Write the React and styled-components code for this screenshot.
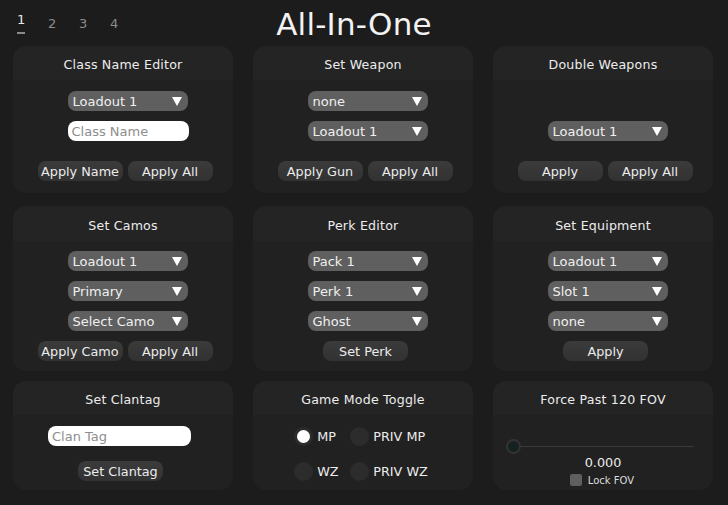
import React, { useState } from 'react';
import styled, { createGlobalStyle } from 'styled-components';

const GlobalStyle = createGlobalStyle`
    html, body {
        margin: 0;
        padding: 0;
        background: #1c1c1c;
    }
    body {
        font-family: "DejaVu Sans", "Open Sans", sans-serif;
        color: #e6e6e6;
        width: 728px;
        height: 505px;
        overflow: hidden;
    }
`;

const Page = styled.div`
    display: flex;
    flex-direction: column;
    padding: 0 15px 0 13px;
`;

const TopBar = styled.header`
    display: grid;
    grid-template-columns: 1fr auto 1fr;
    align-items: start;
    height: 46px;
    padding-right: 18px;
`;

const Tabs = styled.nav`
    display: flex;
    padding: 12px 0 0 2px;
`;

const Tab = styled.button`
    width: 31px;
    background: none;
    border: none;
    padding: 0 0 0 2px;
    text-align: left;
    font-family: inherit;
    font-size: 13px;
    color: ${(p) => (p.$active ? '#e8e8e8' : '#8c8c8c')};
    cursor: pointer;

    &::after {
        content: '';
        display: ${(p) => (p.$active ? 'block' : 'none')};
        width: 8px;
        height: 2px;
        margin-top: 5px;
        background: #8a8a8a;
    }
`;

const Title = styled.h1`
    margin: 6px 0 0;
    font-size: 31px;
    font-weight: normal;
    color: #f2f2f2;
    letter-spacing: 0.2px;
`;

const Row = styled.div`
    display: grid;
    grid-template-columns: repeat(3, 220px);
    column-gap: 20px;
    margin-top: ${(p) => p.$top || 0}px;
    height: ${(p) => p.$height}px;
`;

const Card = styled.section`
    display: flex;
    flex-direction: column;
    background: #212121;
    border-radius: 13px;
    overflow: hidden;
`;

const CardHead = styled.div`
    box-sizing: border-box;
    height: ${(p) => p.$h || 34}px;
    padding-top: 3px;
    flex: none;
    display: flex;
    align-items: center;
    justify-content: center;
    background: #242424;
    font-size: 12.6px;
    color: #ececec;
    letter-spacing: 0.2px;
`;

const CardBody = styled.div`
    display: flex;
    flex-direction: column;
    align-items: center;
    padding-top: ${(p) => p.$pt ?? 10}px;
    gap: 10px;
`;

const SelectBox = styled.div`
    position: relative;
    box-sizing: border-box;
    width: 120px;
    height: 20px;
    border-radius: 8px;
    background: #5f5f5f;
    display: flex;
    align-items: center;
    padding-left: 5px;
    font-size: 13px;
    color: #f0f0f0;
    margin-left: 9px;
`;

const Arrow = styled.svg`
    position: absolute;
    right: 6px;
    top: 6px;
`;

const TextInput = styled.input`
    box-sizing: border-box;
    width: ${(p) => p.$w || 121}px;
    height: 20px;
    border: none;
    border-radius: 8px;
    background: #ffffff;
    padding: 0 0 0 4px;
    font-family: inherit;
    font-size: 13px;
    color: #222;
    outline: none;
    margin-left: ${(p) => p.$ml || 0}px;

    &::placeholder {
        color: #8d8d8d;
    }
`;

const Buttons = styled.div`
    display: flex;
    gap: 5px;
    margin-top: ${(p) => p.$mt || 0}px;
    margin-left: ${(p) => p.$ml || 4}px;
`;

const Button = styled.button`
    box-sizing: border-box;
    width: 85px;
    height: 20px;
    padding: 0;
    border: none;
    border-radius: 8px;
    background: linear-gradient(#3b3b3b, #323232);
    font-family: inherit;
    font-size: 12.8px;
    color: #ececec;
    cursor: pointer;
`;

const Spacer = styled.div`
    height: 20px;
`;

const RadioGrid = styled.div`
    display: grid;
    grid-template-columns: 56px auto;
    row-gap: 16px;
    margin-left: -4px;
`;

const RadioLabel = styled.label`
    display: flex;
    align-items: center;
    gap: 4px;
    height: 19px;
    font-size: 12.8px;
    color: #ececec;
`;

const RadioDot = styled.span`
    box-sizing: border-box;
    width: 19px;
    height: 19px;
    border-radius: 50%;
    background: ${(p) => (p.$on ? '#ffffff' : '#2c2c2c')};
    border: ${(p) => (p.$on ? '3px solid #2c2c2c' : 'none')};
`;

const SliderRow = styled.div`
    position: relative;
    width: 198px;
    height: 16px;
    margin-top: 14px;
    margin-left: 3px;
`;

const Track = styled.div`
    position: absolute;
    left: 7px;
    right: 10px;
    top: 7px;
    height: 1px;
    background: #3a3a3a;
`;

const Knob = styled.div`
    position: absolute;
    left: 0;
    top: 0;
    box-sizing: border-box;
    width: 15px;
    height: 15px;
    border-radius: 50%;
    background: #162222;
    border: 2px solid #333;
`;

const Value = styled.div`
    font-size: 12.8px;
    color: #ececec;
    margin-top: -10px;
`;

const CheckRow = styled.label`
    display: flex;
    align-items: center;
    gap: 6px;
    font-size: 10px;
    color: #dcdcdc;
    margin-top: -6px;
    margin-left: -2px;
`;

const Check = styled.span`
    width: 12px;
    height: 12px;
    border-radius: 2px;
    background: #5f5f5f;
`;

const Select = ({ children }) => (
    <SelectBox>
        {children}
        <Arrow width="10" height="9" viewBox="0 0 10 9">
            <polygon points="0,0 10,0 5,9" fill="#ffffff" />
        </Arrow>
    </SelectBox>
);

const App = () => {
    const [tab, setTab] = useState(1);
    const [mode, setMode] = useState('MP');

    const modes = ['MP', 'PRIV MP', 'WZ', 'PRIV WZ'];

    return (
        <Page>
            <GlobalStyle />
            <TopBar>
                <Tabs>
                    {[1, 2, 3, 4].map((n) => (
                        <Tab key={n} $active={tab === n} onClick={() => setTab(n)}>
                            {n}
                        </Tab>
                    ))}
                </Tabs>
                <Title>All-In-One</Title>
                <div />
            </TopBar>

            <Row $height={147}>
                <Card>
                    <CardHead>Class Name Editor</CardHead>
                    <CardBody $pt={11}>
                        <Select>Loadout 1</Select>
                        <TextInput placeholder="Class Name" $ml={10} />
                        <Buttons $mt={10}>
                            <Button>Apply Name</Button>
                            <Button>Apply All</Button>
                        </Buttons>
                    </CardBody>
                </Card>
                <Card>
                    <CardHead>Set Weapon</CardHead>
                    <CardBody $pt={11}>
                        <Select>none</Select>
                        <Select>Loadout 1</Select>
                        <Buttons $mt={10}>
                            <Button>Apply Gun</Button>
                            <Button>Apply All</Button>
                        </Buttons>
                    </CardBody>
                </Card>
                <Card>
                    <CardHead>Double Weapons</CardHead>
                    <CardBody $pt={11}>
                        <Spacer />
                        <Select>Loadout 1</Select>
                        <Buttons $mt={10}>
                            <Button>Apply</Button>
                            <Button>Apply All</Button>
                        </Buttons>
                    </CardBody>
                </Card>
            </Row>

            <Row $top={13} $height={165}>
                <Card>
                    <CardHead $h={35}>Set Camos</CardHead>
                    <CardBody>
                        <Select>Loadout 1</Select>
                        <Select>Primary</Select>
                        <Select>Select Camo</Select>
                        <Buttons>
                            <Button>Apply Camo</Button>
                            <Button>Apply All</Button>
                        </Buttons>
                    </CardBody>
                </Card>
                <Card>
                    <CardHead $h={35}>Perk Editor</CardHead>
                    <CardBody>
                        <Select>Pack 1</Select>
                        <Select>Perk 1</Select>
                        <Select>Ghost</Select>
                        <Buttons $ml={5}>
                            <Button>Set Perk</Button>
                        </Buttons>
                    </CardBody>
                </Card>
                <Card>
                    <CardHead $h={35}>Set Equipment</CardHead>
                    <CardBody>
                        <Select>Loadout 1</Select>
                        <Select>Slot 1</Select>
                        <Select>none</Select>
                        <Buttons $ml={5}>
                            <Button>Apply</Button>
                        </Buttons>
                    </CardBody>
                </Card>
            </Row>

            <Row $top={10} $height={109}>
                <Card>
                    <CardHead>Set Clantag</CardHead>
                    <CardBody $pt={11}>
                        <TextInput placeholder="Clan Tag" $w={143} $ml={-7} />
                        <Buttons $mt={5} $ml={-5}>
                            <Button>Set Clantag</Button>
                        </Buttons>
                    </CardBody>
                </Card>
                <Card>
                    <CardHead>Game Mode Toggle</CardHead>
                    <CardBody $pt={12}>
                        <RadioGrid>
                            {modes.map((m) => (
                                <RadioLabel key={m} onClick={() => setMode(m)}>
                                    <RadioDot $on={mode === m} />
                                    {m}
                                </RadioLabel>
                            ))}
                        </RadioGrid>
                    </CardBody>
                </Card>
                <Card>
                    <CardHead>Force Past 120 FOV</CardHead>
                    <CardBody $pt={10}>
                        <SliderRow>
                            <Track />
                            <Knob />
                        </SliderRow>
                        <Value>0.000</Value>
                        <CheckRow>
                            <Check />
                            Lock FOV
                        </CheckRow>
                    </CardBody>
                </Card>
            </Row>
        </Page>
    );
};

export default App;
